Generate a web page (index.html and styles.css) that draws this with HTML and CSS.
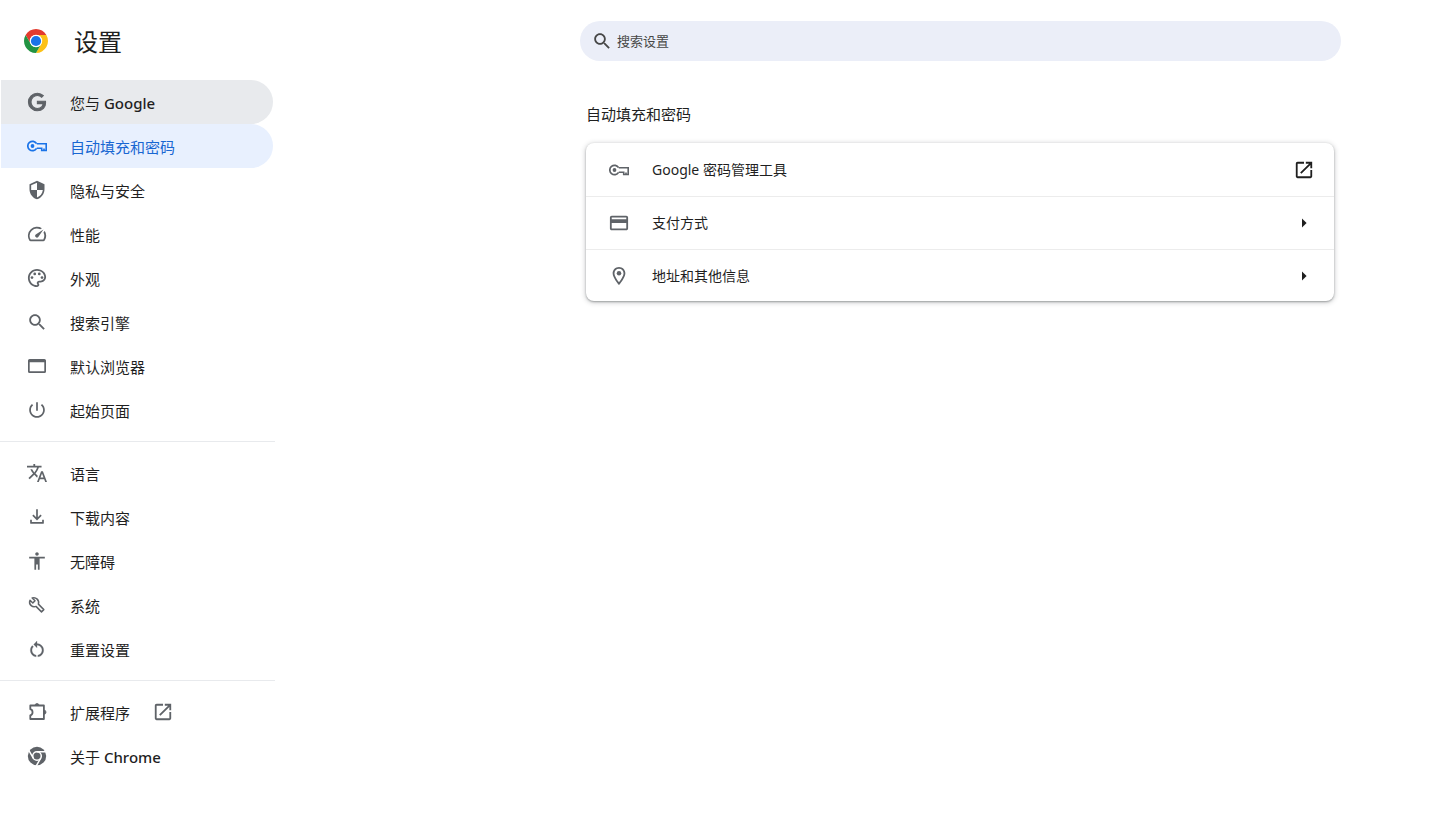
FILE: index.html
```html
<!DOCTYPE html>
<html lang="zh-CN">
<head>
<meta charset="utf-8">
<meta name="viewport" content="width=device-width, initial-scale=1">
<title>设置</title>
<link rel="stylesheet" href="styles.css">
</head>
<body>
<svg class="defs" aria-hidden="true">
  <symbol id="key" viewBox="0 0 20 20">
    <path d="M9.8 7.7H19.2V14.5H14.7V12.3H9.8M17 14.5V12.4" fill="none" stroke="currentColor" stroke-width="1.6"/>
    <path d="M9.6 7.7A4.7 4.7 0 1 0 9.6 12.3" fill="none" stroke="currentColor" stroke-width="1.7"/>
    <circle cx="5.5" cy="10" r="1.9" fill="currentColor"/>
  </symbol>
  <symbol id="open" viewBox="1 1 22 22">
    <path d="M19 19H5V5h7V3H5c-1.11 0-2 .9-2 2v14c0 1.1.89 2 2 2h14c1.1 0 2-.9 2-2v-7h-2v7zM14 3v2h3.59l-9.83 9.83 1.41 1.41L19 6.41V10h2V3h-7z"/>
  </symbol>
  <symbol id="search" viewBox="0.5 0.5 22.5 22.5">
    <path d="M15.5 14h-.79l-.28-.27C15.41 12.59 16 11.11 16 9.5 16 5.91 13.09 3 9.5 3S3 5.91 3 9.5 5.91 16 9.5 16c1.61 0 3.09-.59 4.23-1.57l.27.28v.79l5 4.99L20.49 19l-4.99-5zm-6 0C7.01 14 5 11.99 5 9.5S7.01 5 9.5 5 14 7.01 14 9.5 11.99 14 9.5 14z"/>
  </symbol>
</svg>

<div class="layout">
  <aside class="sidebar">
    <header class="brand">
      <svg class="logo" viewBox="-12 -12 24 24" aria-hidden="true">
        <path fill="#e33b2e" d="M-10.39-6A12 12 0 0 1 10.39-6H0A6 6 0 0 0-5.2 3Z"/>
        <path fill="#fcc117" d="M10.39-6A12 12 0 0 1 0 12L5.2 3A6 6 0 0 0 0-6Z"/>
        <path fill="#229342" d="M0 12A12 12 0 0 1-10.39-6L-5.2 3A6 6 0 0 0 5.2 3Z"/>
        <circle r="6.2" fill="#fff"/>
        <circle r="5.1" fill="#1a73e8"/>
      </svg>
      <h1 class="title">设置</h1>
    </header>

    <nav class="menu">
      <a class="item item-hover" href="#people">
        <svg class="icon" viewBox="-1.6 -1.6 27.2 27.2"><path stroke="currentColor" stroke-width="1.4" d="M12.48 10.92v3.28h7.84c-.24 1.84-.853 3.187-1.787 4.133-1.147 1.147-2.933 2.4-6.053 2.4-4.827 0-8.6-3.893-8.6-8.72s3.773-8.72 8.6-8.72c2.6 0 4.507 1.027 5.907 2.347l2.307-2.307C18.747 1.44 16.133 0 12.48 0 5.867 0 .307 5.387.307 12s5.56 12 12.173 12c3.573 0 6.267-1.173 8.373-3.36 2.16-2.16 2.84-5.213 2.84-7.667 0-.76-.053-1.467-.173-2.053H12.48z"/></svg>
        <span>您与 <b class="latin">Google</b></span>
      </a>
      <a class="item item-selected" href="#autofill" aria-current="page">
        <svg class="icon"><use href="#key"/></svg>
        <span>自动填充和密码</span>
      </a>
      <a class="item" href="#privacy">
        <svg class="icon" viewBox="0 0 24 24"><path d="M12 1L3 5v6c0 5.55 3.84 10.74 9 12 5.16-1.26 9-6.45 9-12V5l-9-4zm0 10.99h7c-.53 4.12-3.28 7.79-7 8.94V12H5V6.3l7-3.11v8.8z"/></svg>
        <span>隐私与安全</span>
      </a>
      <a class="item" href="#performance">
        <svg class="icon" viewBox="1 1 22 22"><path d="M20.38 8.57l-1.23 1.85a8 8 0 0 1-.22 7.58H5.07A8 8 0 0 1 15.58 6.85l1.85-1.23A10 10 0 0 0 3.35 19a2 2 0 0 0 1.72 1h13.85a2 2 0 0 0 1.74-1 10 10 0 0 0-.27-10.44zm-9.79 6.84a2 2 0 0 0 2.83 0l5.66-8.49-8.49 5.66a2 2 0 0 0 0 2.83z"/></svg>
        <span>性能</span>
      </a>
      <a class="item" href="#appearance">
        <svg class="icon" viewBox="1 1 22 22"><path d="M12 22C6.49 22 2 17.51 2 12S6.49 2 12 2s10 4.04 10 9c0 3.31-2.69 6-6 6h-1.77c-.28 0-.5.22-.5.5 0 .12.05.23.13.33.41.47.64 1.06.64 1.67 0 1.38-1.12 2.5-2.5 2.5zm0-18c-4.41 0-8 3.59-8 8s3.59 8 8 8c.28 0 .5-.22.5-.5 0-.16-.08-.28-.14-.35-.41-.46-.63-1.05-.63-1.65 0-1.38 1.12-2.5 2.5-2.5H16c2.21 0 4-1.79 4-4 0-3.86-3.59-7-8-7z"/><circle cx="6.5" cy="11.5" r="1.5"/><circle cx="9.5" cy="7.5" r="1.5"/><circle cx="14.5" cy="7.5" r="1.5"/><circle cx="17.5" cy="11.5" r="1.5"/></svg>
        <span>外观</span>
      </a>
      <a class="item" href="#search-engine">
        <svg class="icon"><use href="#search"/></svg>
        <span>搜索引擎</span>
      </a>
      <a class="item" href="#default-browser">
        <svg class="icon" viewBox="0 0 20 20"><path fill-rule="evenodd" d="M2.6 3H17.4A1.6 1.6 0 0 1 19 4.6V15.4A1.6 1.6 0 0 1 17.4 17H2.6A1.6 1.6 0 0 1 1 15.4V4.6A1.6 1.6 0 0 1 2.6 3ZM2.7 6.3V15.3H17.3V6.3Z"/></svg>
        <span>默认浏览器</span>
      </a>
      <a class="item" href="#startup">
        <svg class="icon" viewBox=".5 .5 23 23"><path d="M13 3h-2v10h2V3zm4.83 2.17l-1.42 1.42C17.99 7.86 19 9.81 19 12c0 3.87-3.13 7-7 7s-7-3.13-7-7c0-2.19 1.01-4.14 2.58-5.42L6.17 5.17C4.23 6.82 3 9.26 3 12c0 4.97 4.03 9 9 9s9-4.03 9-9c0-2.74-1.23-5.18-3.17-6.83z"/></svg>
        <span>起始页面</span>
      </a>
      <hr class="rule">
      <a class="item" href="#languages">
        <svg class="icon" viewBox="1 1 22 22"><path d="M12.87 15.07l-2.54-2.51.03-.03c1.74-1.94 2.98-4.17 3.71-6.53H17V4h-7V2H8v2H1v1.99h11.17C11.5 7.92 10.44 9.75 9 11.35 8.07 10.32 7.3 9.19 6.69 8h-2c.73 1.63 1.73 3.17 2.98 4.56l-5.09 5.02L4 19l5-5 3.11 3.11.76-2.04zM18.5 10h-2L12 22h2l1.12-3h4.75L21 22h2l-4.5-12zm-2.62 7l1.62-4.33L19.12 17h-3.24z"/></svg>
        <span>语言</span>
      </a>
      <a class="item" href="#downloads">
        <svg class="icon" viewBox="0 0 20 20"><g fill="none" stroke="currentColor" stroke-width="1.7"><path d="M10 2.3V12M5.9 8.2L10 12.3L14.1 8.2"/><path stroke-linejoin="round" d="M4 12.8V15.9H16V12.8"/></g></svg>
        <span>下载内容</span>
      </a>
      <a class="item" href="#accessibility">
        <svg class="icon" viewBox=".5 .5 23 23"><path d="M12 2c1.1 0 2 .9 2 2s-.9 2-2 2-2-.9-2-2 .9-2 2-2zm9 7h-6v13h-2v-6h-2v6H9V9H3V7h18v2z"/></svg>
        <span>无障碍</span>
      </a>
      <a class="item" href="#system">
        <svg class="icon" viewBox="0 0 20 20"><path fill="none" stroke="currentColor" stroke-width="1.5" stroke-linejoin="round" d="M5.2 3L8 5.8L5.8 8L3 5.2C2.2 7.2 2.7 9.3 4.2 10.600C5.500 11.700 7.300 12 9 11.400L14.500 16.900L16.800 14.600L11.400 9.100C12.600 5.200 9 1.700 5.200 3Z"/></svg>
        <span>系统</span>
      </a>
      <a class="item" href="#reset">
        <svg class="icon" viewBox="0 -.5 24 24"><path stroke="currentColor" stroke-width=".3" d="M12 5V2L8 6l4 4V7c3.31 0 6 2.69 6 6 0 2.97-2.17 5.43-5 5.91v2.02c3.95-.49 7-3.85 7-7.93 0-4.42-3.58-8-8-8zM6 13c0-1.65.67-3.15 1.76-4.24L6.34 7.34C4.9 8.79 4 10.79 4 13c0 4.08 3.05 7.44 7 7.93v-2.02c-2.83-.48-5-2.94-5-5.91z"/></svg>
        <span>重置设置</span>
      </a>
      <hr class="rule">
      <a class="item item-external" href="#extensions">
        <svg class="icon" viewBox="0 0 20 20"><path fill="none" stroke="currentColor" stroke-width="1.8" stroke-linejoin="round" d="M3.3 3.5H16.9V17H3.3V13.3C6.3 12.5 6.3 8 3.3 7.2Z"/><path d="M8 3.5A2 2 0 0 1 12 3.5ZM17 8.2A2 2 0 0 1 17 12.2Z" stroke="currentColor" stroke-width=".8"/></svg>
        <span>扩展程序</span>
        <svg class="icon"><use href="#open"/></svg>
      </a>
      <a class="item" href="#about">
        <svg class="icon" viewBox="-10 -10 20 20"><circle r="9.2"/><g fill="none" stroke="#fff" stroke-width="1.5"><circle r="4.3"/><path d="M0-4.3H9.5M3.72 2.15L-1.03 10.38M-3.72 2.15L-8.47-6.08"/></g></svg>
        <span>关于 <b class="latin">Chrome</b></span>
      </a>
    </nav>
  </aside>

  <main class="main">
    <form class="search" role="search">
      <label class="search-label" for="q" aria-label="搜索设置"><svg class="icon"><use href="#search"/></svg></label>
      <input class="search-input" id="q" type="search" placeholder="搜索设置">
    </form>
    <section class="section">
      <h2 class="heading">自动填充和密码</h2>
      <div class="card">
        <button class="row" type="button">
          <svg class="icon"><use href="#key"/></svg>
          <span class="row-label">Google 密码管理工具</span>
          <svg class="icon row-end"><use href="#open"/></svg>
        </button>
        <button class="row" type="button">
          <svg class="icon" viewBox="1 1 22 22"><path d="M20 4H4c-1.11 0-1.99.89-1.99 2L2 18c0 1.11.89 2 2 2h16c1.11 0 2-.89 2-2V6c0-1.11-.89-2-2-2zm0 14H4v-6h16v6zm0-10H4V6h16v2z"/></svg>
          <span class="row-label">支付方式</span>
          <svg class="icon row-end" viewBox="0 0 20 20"><path d="M8 5.4L12.6 10L8 14.6Z"/></svg>
        </button>
        <button class="row" type="button">
          <svg class="icon" viewBox="1 1 22 22"><path d="M12 2C8.13 2 5 5.13 5 9c0 5.25 7 13 7 13s7-7.75 7-13c0-3.87-3.13-7-7-7zM7 9c0-2.76 2.24-5 5-5s5 2.24 5 5c0 2.88-2.88 7.19-5 9.88C9.92 16.21 7 11.85 7 9z"/><circle cx="12" cy="9" r="2.5"/></svg>
          <span class="row-label">地址和其他信息</span>
          <svg class="icon row-end" viewBox="0 0 20 20"><path d="M8 5.4L12.6 10L8 14.6Z"/></svg>
        </button>
      </div>
    </section>
  </main>
</div>
</body>
</html>
```
FILE: styles.css
```css
* {
  box-sizing: border-box;
}

body {
  margin: 0;
  background: #fff;
  color: #1f1f1f;
  font-family: "Noto Sans", "Noto Sans CJK SC", sans-serif;
  font-size: 14px;
}

.defs {
  display: none;
}

.layout {
  display: flex;
  min-height: 100vh;
}

.sidebar {
  flex: 0 0 275px;
}

.brand {
  display: flex;
  align-items: center;
  gap: 26px;
  height: 80px;
  padding: 2px 24px 0;
}

.logo {
  width: 24px;
  height: 24px;
}

.title {
  margin: 0;
  padding-top: 2px;
  font-size: 24px;
  line-height: 32px;
  font-weight: 400;
}

.icon {
  flex: none;
  width: 20px;
  height: 20px;
  fill: currentColor;
  color: #5f6368;
}

.item {
  display: flex;
  align-items: center;
  gap: 23px;
  height: 44px;
  margin: 0 2px 0 1px;
  padding-left: 26px;
  border-radius: 0 22px 22px 0;
  color: #1f1f1f;
  font-size: 15px;
  line-height: 20px;
  text-decoration: none;
}

.item span {
  padding-top: 2px;
}

.latin {
  font-weight: 500;
}

.item-hover {
  background: #e8eaed;
}

.item-selected {
  background: #e8f0fe;
  color: #1967d2;
}

.item-selected .icon {
  color: #1a73e8;
}

.rule {
  height: 1px;
  margin: 9px 0;
  border: 0;
  background: #e8eaed;
}

.main {
  flex: 1;
  min-width: 0;
  padding: 21px 105px 40px 305px;
}

.search {
  display: flex;
  align-items: center;
  gap: 5px;
  height: 40px;
  padding: 0 20px 0 12px;
  border-radius: 20px;
  background: #ebeef8;
}

.search-label {
  display: flex;
}

.search .icon {
  color: #474747;
}

.search-input {
  flex: 1;
  min-width: 0;
  padding: 0;
  border: 0;
  outline: 0;
  background: transparent;
  color: #1f1f1f;
  font: inherit;
  font-size: 13px;
}

.search-input::placeholder {
  color: #474747;
}

.section {
  padding: 41px 7px 0 6px;
}

.heading {
  margin: 0 0 17px;
  font-size: 15px;
  line-height: 24px;
  font-weight: 400;
}

.card {
  overflow: hidden;
  border-radius: 8px;
  background: #fff;
  box-shadow: 0 1px 2px rgba(60, 64, 67, .4), 0 1px 5px 1px rgba(60, 64, 67, .22);
}

.row {
  display: flex;
  align-items: center;
  gap: 23px;
  width: 100%;
  height: 53px;
  padding: 0 20px 0 23px;
  border: 0;
  background: none;
  color: inherit;
  font: inherit;
  text-align: left;
}

.row + .row {
  border-top: 1px solid #ececec;
}

.row:last-child {
  height: 52px;
}

.row-label {
  flex: 1;
  padding-bottom: 2px;
}

.row-end {
  color: #1f1f1f;
}
```
